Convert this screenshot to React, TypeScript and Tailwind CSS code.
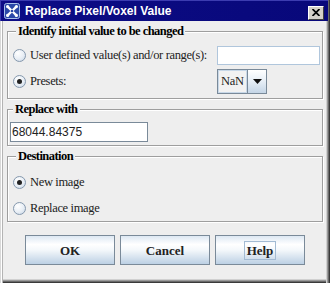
const serif = "font-['Liberation_Serif','Times_New_Roman',serif]";

function Radio({ checked }: { checked?: boolean }) {
  return (
    <span className="w-[13px] h-[13px] shrink-0 rounded-full border border-[#8598ad] bg-[radial-gradient(circle_at_35%_30%,#ffffff_0%,#e8eef5_55%,#c3d3e4_100%)] flex items-center justify-center">
      {checked && <span className="w-[5px] h-[5px] rounded-full bg-[#222]" />}
    </span>
  );
}

function Legend({ children }: { children: string }) {
  return (
    <legend className={`ml-[3px] px-[2px] bg-[#eeeeee] text-[12.5px] tracking-[-0.55px] leading-[15px] font-bold text-black whitespace-nowrap ${serif}`}>
      {children}
    </legend>
  );
}

function Label({ children }: { children: string }) {
  return (
    <span className={`ml-[4px] text-[12.5px] tracking-[-0.35px] text-[#222] whitespace-nowrap ${serif}`}>
      {children}
    </span>
  );
}

function Btn({ label, focused }: { label: string; focused?: boolean }) {
  return (
    <button className="w-[90px] h-[30px] border border-[#7a8a99] bg-[linear-gradient(to_bottom,#dde8f3_0%,#ffffff_30%,#f4f8fb_50%,#bcd0e4_100%)] flex items-center justify-center">
      <span
        className={`text-[13px] leading-[15px] font-bold text-[#222] px-[2px] py-[1px] ${serif} ${
          focused ? "border border-[#a3bbd3]" : "border border-transparent"
        }`}
      >
        {label}
      </span>
    </button>
  );
}

export default function App() {
  return (
    <div className="w-[330px] h-[283px] bg-[#eeeeee] flex flex-col shadow-[inset_1px_0_0_#d8d8d8,inset_2px_0_0_#ffffff,inset_3px_0_0_#b4b4b4,inset_-1px_0_0_#3a3a3a,inset_-2px_0_0_#6a6a6a,inset_-3px_0_0_#9a9a9a,inset_-4px_0_0_#d0d0d0,inset_0_-1px_0_#3a3a3a,inset_0_-2px_0_#6a6a6a,inset_0_-3px_0_#9a9a9a,inset_0_-4px_0_#d0d0d0]">
      {/* title bar */}
      <div className="h-[21px] shrink-0 mr-[2px] bg-[linear-gradient(to_right,#0c0c86,#08087a)] flex items-center pl-[3px] pr-[4px] border-t border-l border-[#3c3cb0]">
        <svg width="16" height="16" viewBox="0 0 16 16" className="shrink-0">
          <rect x="0.5" y="0.5" width="15" height="15" rx="2" fill="#2a48a8" stroke="#a8c0e8" />
          <path d="M4 4 L12 12 M12 4 L4 12" stroke="#ffffff" strokeWidth="2.4" strokeLinecap="round" />
          <circle cx="3.6" cy="3.6" r="1.6" fill="#fff" />
          <circle cx="12.4" cy="3.6" r="1.6" fill="#fff" />
          <circle cx="3.6" cy="12.4" r="1.6" fill="#fff" />
          <circle cx="12.4" cy="12.4" r="1.6" fill="#fff" />
          <circle cx="8" cy="8" r="1.3" fill="#2a48a8" />
        </svg>
        <span className="ml-[5px] text-white font-bold text-[12px] leading-[14px] font-['Liberation_Sans',Arial,sans-serif]">
          Replace Pixel/Voxel Value
        </span>
        <span className="ml-auto mt-[3px] w-[16px] h-[14px] bg-[#d4d0c8] border border-t-white border-l-white border-r-[#404040] border-b-[#404040] flex items-center justify-center">
          <svg width="8" height="7" viewBox="0 0 8 7">
            <path d="M0.5 0 L7.5 7 M7.5 0 L0.5 7" stroke="#000" strokeWidth="1.7" />
          </svg>
        </span>
      </div>

      <div className="flex flex-col pl-[7px] pr-[7px] pt-[3px]">
        {/* section 1 */}
        <fieldset className="border border-[#9e9e9e] shadow-[inset_1px_1px_0_#ffffff,1px_1px_0_#ffffff] pl-[5px] pr-[2px] pt-[7px] pb-[4px]">
          <Legend>Identify initial value to be changed</Legend>
          <div className="h-[19px] flex items-center">
            <Radio />
            <Label>User defined value(s) and/or range(s):</Label>
            <span className="ml-auto shrink-0 w-[103px] h-[19px] bg-white border border-[#b0c6dc]" />
          </div>
          <div className="mt-[4px] h-[25px] flex items-center">
            <Radio checked />
            <Label>Presets:</Label>
            <div className="ml-auto mr-[53px] h-[25px] flex">
              <div className="w-[31px] h-[25px] border border-[#7a8a99] shadow-[inset_1px_1px_0_#c8d8e8,inset_-1px_-1px_0_#c8d8e8] bg-[#f2f2f2] flex items-center pl-[3px]">
                <span className={`text-[12.5px] tracking-[-0.35px] text-[#222] ${serif}`}>NaN</span>
              </div>
              <div className="w-[19px] h-[25px] border border-l-0 border-[#7a8a99] bg-[linear-gradient(to_bottom,#ffffff_0%,#e6eef6_50%,#c4d5e6_100%)] flex items-center justify-center">
                <svg width="9" height="5" viewBox="0 0 9 5">
                  <path d="M0 0 H9 L4.5 5 Z" fill="#111" />
                </svg>
              </div>
            </div>
          </div>
        </fieldset>

        {/* section 2 */}
        <fieldset className="mt-[3px] border border-[#9e9e9e] shadow-[inset_1px_1px_0_#ffffff,1px_1px_0_#ffffff] pl-[2px] pt-[5px] pb-[3px]">
          <Legend>Replace with</Legend>
          <div className="w-[138px] h-[20px] bg-white border border-[#7a8a99] flex items-center pl-[1px]">
            <span className="text-[12px] text-[#222] font-['Liberation_Sans',Arial,sans-serif]">68044.84375</span>
          </div>
        </fieldset>

        {/* section 3 */}
        <fieldset className="mt-[3px] border border-[#9e9e9e] shadow-[inset_1px_1px_0_#ffffff,1px_1px_0_#ffffff] pl-[5px] pt-[5px]">
          <Legend>Destination</Legend>
          <div className="h-[26px] flex items-center">
            <Radio checked />
            <Label>New image</Label>
          </div>
          <div className="h-[26px] flex items-center">
            <Radio />
            <Label>Replace image</Label>
          </div>
        </fieldset>
      </div>

      {/* buttons */}
      <div className="mt-[13px] flex justify-center gap-[5px]">
        <Btn label="OK" />
        <Btn label="Cancel" />
        <Btn label="Help" focused />
      </div>
    </div>
  );
}
